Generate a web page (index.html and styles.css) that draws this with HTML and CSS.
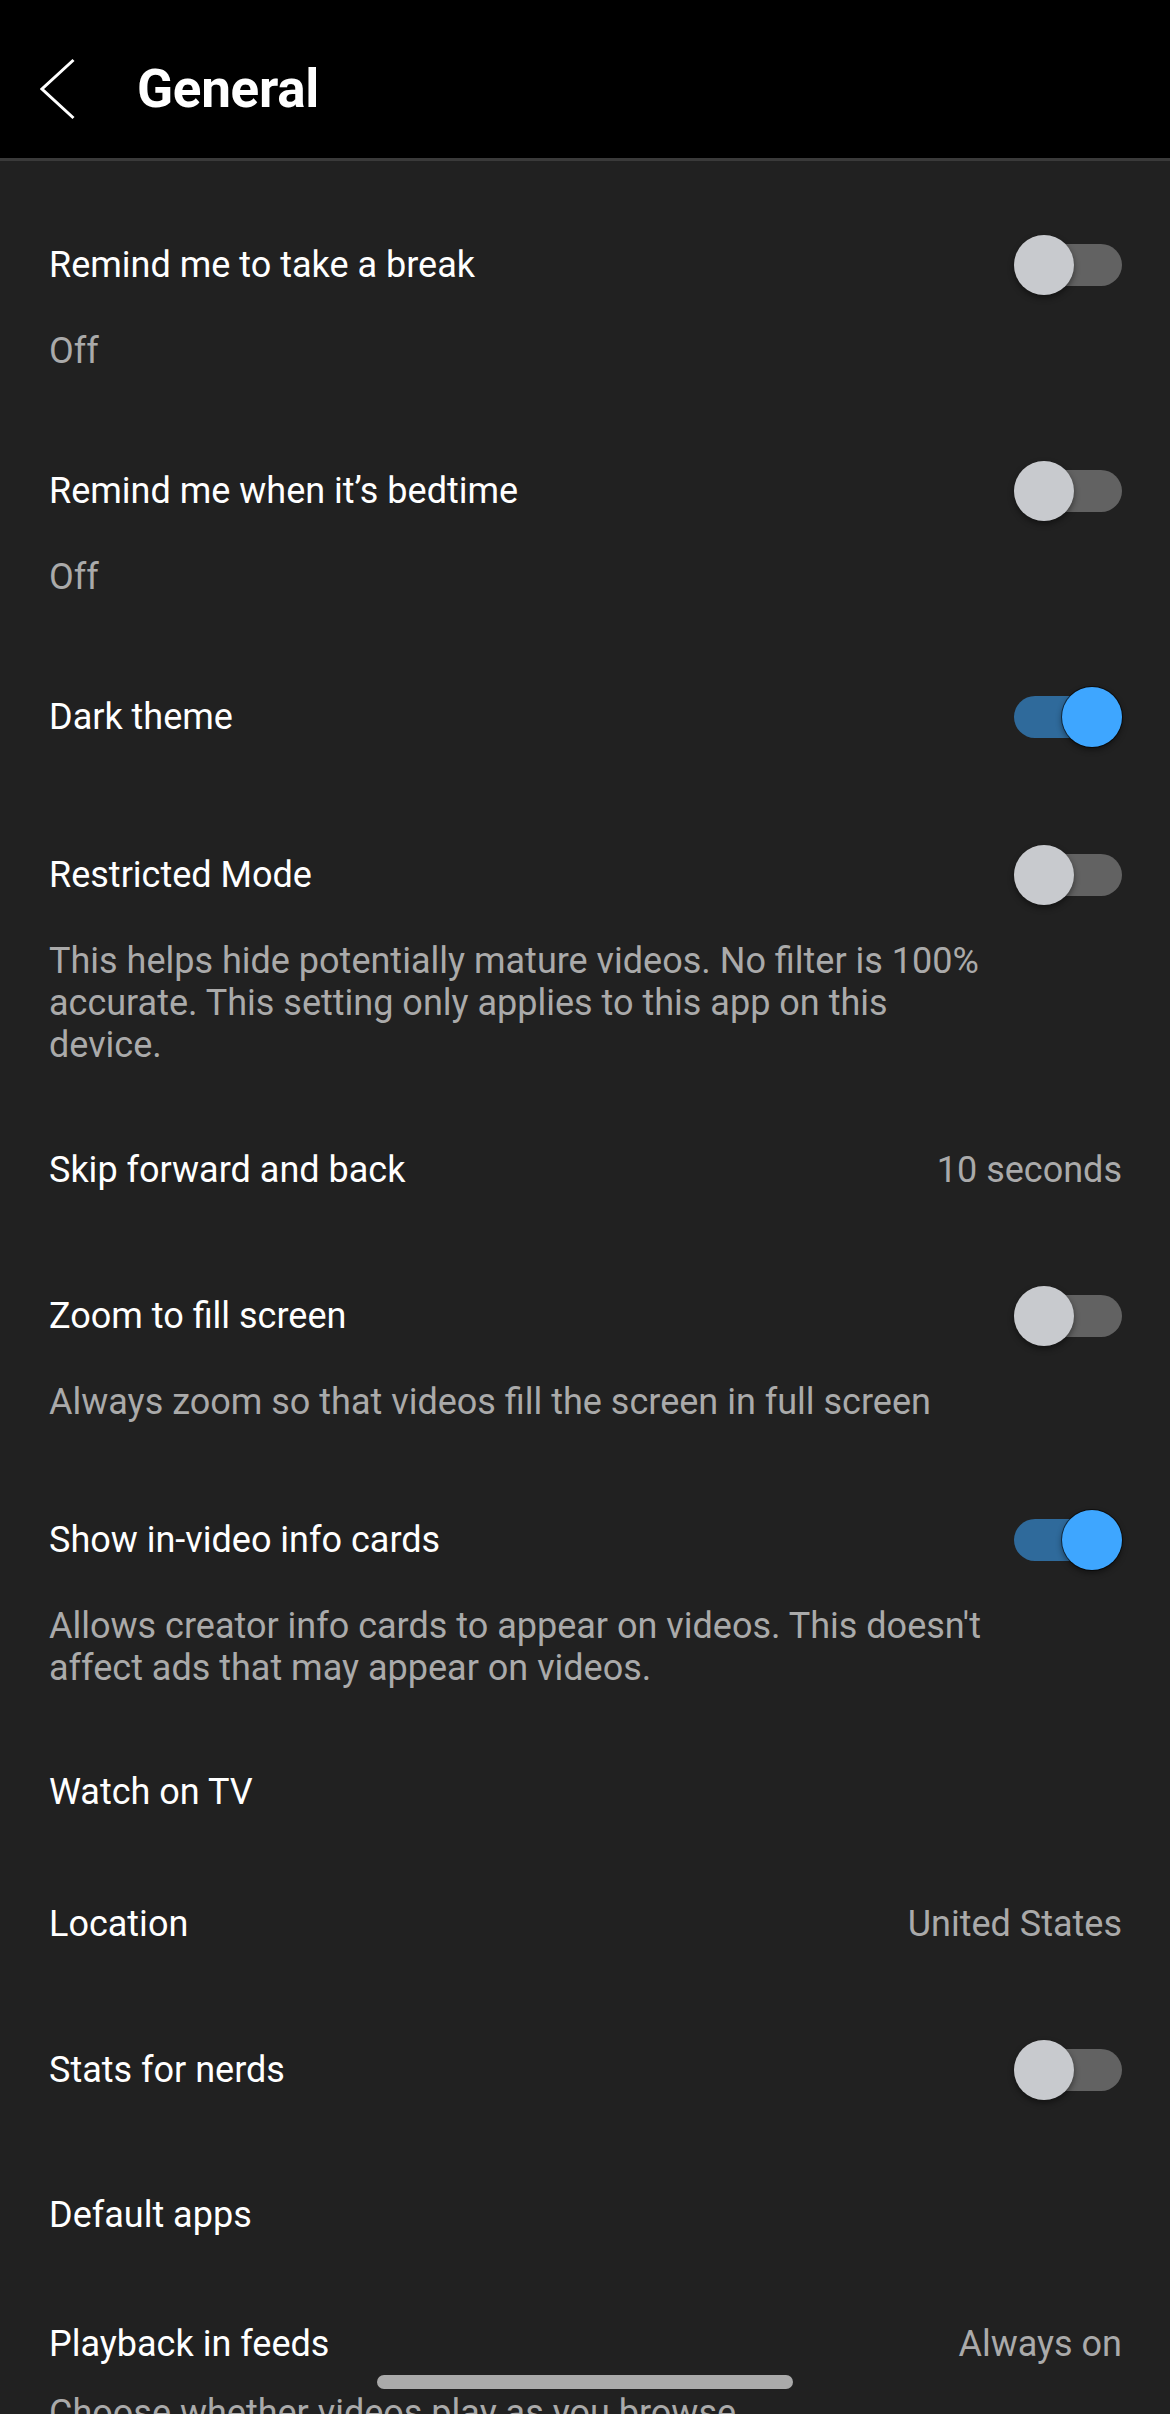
FILE: index.html
```html
<!DOCTYPE html>
<html lang="en">
<head>
<meta charset="utf-8">
<title>General</title>
<link rel="stylesheet" href="styles.css">
</head>
<body>
<div class="screen">
  <header class="appbar">
    <span class="back" aria-label="Back">
      <svg width="36" height="62" viewBox="0 0 36 62"><path d="M33.5 2 L2 31 L33.5 60" fill="none" stroke="#ffffff" stroke-width="3" stroke-linejoin="miter"/></svg>
    </span>
    <h1 class="appbar-title">General</h1>
  </header>

  <main class="list">
    <div class="row">
      <div class="row-head"><span class="title">Remind me to take a break</span><span class="switch"></span></div>
      <p class="summary">Off</p>
    </div>
    <div class="row">
      <div class="row-head"><span class="title">Remind me when it’s bedtime</span><span class="switch"></span></div>
      <p class="summary">Off</p>
    </div>
    <div class="row row--single">
      <div class="row-head"><span class="title">Dark theme</span><span class="switch switch--on"></span></div>
    </div>
    <div class="row row--desc">
      <div class="row-head"><span class="title">Restricted Mode</span><span class="switch"></span></div>
      <p class="summary">This helps hide potentially mature videos. No filter is 100%<br>accurate. This setting only applies to this app on this<br>device.</p>
    </div>
    <div class="row row--value">
      <div class="row-head"><span class="title">Skip forward and back</span><span class="value">10 seconds</span></div>
    </div>
    <div class="row">
      <div class="row-head"><span class="title">Zoom to fill screen</span><span class="switch"></span></div>
      <p class="summary">Always zoom so that videos fill the screen in full screen</p>
    </div>
    <div class="row row--desc">
      <div class="row-head"><span class="title">Show in-video info cards</span><span class="switch switch--on"></span></div>
      <p class="summary">Allows creator info cards to appear on videos. This doesn't<br>affect ads that may appear on videos.</p>
    </div>
    <div class="row row--link">
      <div class="row-head"><span class="title">Watch on TV</span></div>
    </div>
    <div class="row row--value">
      <div class="row-head"><span class="title">Location</span><span class="value">United States</span></div>
    </div>
    <div class="row row--single">
      <div class="row-head"><span class="title">Stats for nerds</span><span class="switch"></span></div>
    </div>
    <div class="row row--link">
      <div class="row-head"><span class="title">Default apps</span></div>
    </div>
    <div class="row row--value row--last">
      <div class="row-head"><span class="title">Playback in feeds</span><span class="value">Always on</span></div>
      <p class="summary">Choose whether videos play as you browse</p>
    </div>
  </main>

  <div class="home-indicator"></div>
</div>
</body>
</html>
```

FILE: styles.css
```css
* { box-sizing: border-box; }

html, body {
  margin: 0;
  padding: 0;
  background: #212121;
}

body {
  font-family: Roboto, "Liberation Sans", Arial, sans-serif;
  color: #ffffff;
}

.screen {
  position: relative;
  width: 1170px;
  height: 2414px;
  overflow: hidden;
  background: #212121;
}

/* ---------- App bar ---------- */
.appbar {
  height: 161px;
  padding-top: 20px;
  background: #000000;
  border-bottom: 3px solid #3a3a3a;
  display: flex;
  align-items: center;
}

.back {
  display: flex;
  margin-left: 40px;
  width: 36px;
  height: 62px;
}

.appbar-title {
  margin: 0 0 0 61px;
  font-family: Roboto, "Liberation Sans", Arial, sans-serif;
  font-weight: 700;
  font-size: 53px;
  line-height: 62px;
  letter-spacing: -0.3px;
  color: #ffffff;
}

/* ---------- List ---------- */
.list {
  padding-top: 34px;
}

.row {
  padding: 49px 48px 49px 49px;
}

.row--single { padding-bottom: 69px; }
.row--desc { padding-top: 47px; padding-bottom: 48px; }
.row--value { padding-top: 35px; padding-bottom: 55px; }
.row--link { padding-top: 34px; padding-bottom: 55px; }
.row--last { padding-top: 32px; }

.row-head {
  display: flex;
  align-items: center;
  justify-content: space-between;
  height: 42px;
}

.title {
  font-size: 36px;
  line-height: 42px;
  color: #ffffff;
  white-space: nowrap;
}

.value {
  font-size: 36px;
  line-height: 42px;
  color: #aaaaaa;
  white-space: nowrap;
}

.summary {
  margin: 44px 0 0;
  font-size: 36px;
  line-height: 42px;
  color: #aaaaaa;
}

.row--last .summary {
  margin-top: 27px;
}

/* ---------- Switch ---------- */
.switch {
  position: relative;
  flex-shrink: 0;
  width: 108px;
  height: 60px;
  margin: -9px 0;
}

.switch::before {
  content: "";
  position: absolute;
  left: 0;
  right: 0;
  top: 9px;
  height: 42px;
  border-radius: 21px;
  background: #626262;
}

.switch::after {
  content: "";
  position: absolute;
  top: 0;
  left: 0;
  width: 60px;
  height: 60px;
  border-radius: 50%;
  background: #c8cace;
  box-shadow: 0 3px 6px rgba(0, 0, 0, 0.45);
}

.switch--on::before { background: #2f6a9b; }
.switch--on::after {
  left: 48px;
  background: #3ea6ff;
  box-shadow: 0 0 0 1px rgba(0, 0, 0, 0.55), 0 3px 6px rgba(0, 0, 0, 0.45);
}

/* ---------- Home indicator ---------- */
.home-indicator {
  position: absolute;
  left: 377px;
  top: 2375px;
  width: 416px;
  height: 14px;
  border-radius: 7px;
  background: #aaaaaa;
}
```
